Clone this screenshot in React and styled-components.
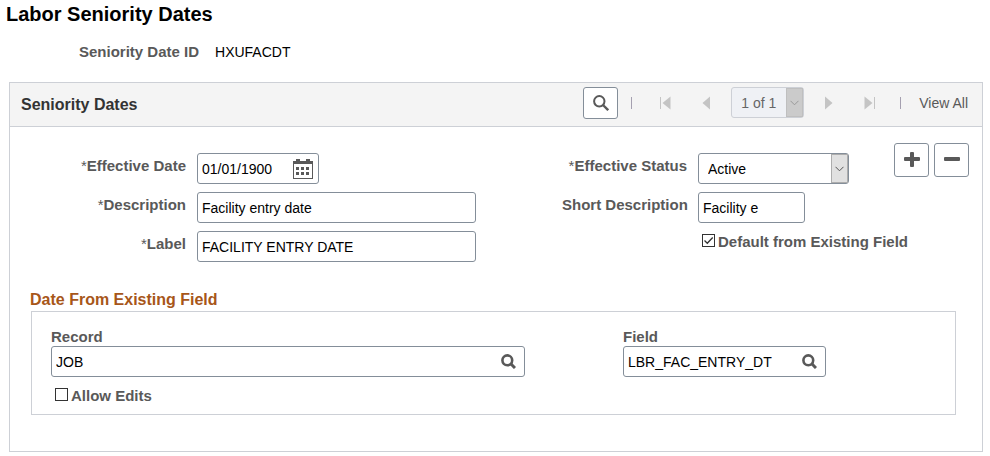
import React, { useState } from 'react';
import styled, { createGlobalStyle } from 'styled-components';

const GlobalStyle = createGlobalStyle`
  * {
    box-sizing: border-box;
  }

  body {
    margin: 0;
    background: #fff;
    color: #000;
    font-family: "Liberation Sans", Arial, sans-serif;
    font-size: 14px;
  }

  input, select, button {
    font-family: inherit;
    font-size: 14px;
  }
`;

const Page = styled.main`
  padding: 2px 7px 4px 9px;
`;

const PageTitle = styled.h1`
  margin: 0 0 0 -3px;
  font-size: 20px;
  line-height: 24px;
`;

const KeyRow = styled.div`
  display: flex;
  align-items: center;
  gap: 16px;
  padding: 16px 0 20px 70px;
  line-height: 20px;
`;

const KeyLabel = styled.span`
  color: #595959;
  font-size: 15px;
  font-weight: bold;
`;

const Panel = styled.section`
  border: 1px solid #cdd0d6;
`;

const PanelHeader = styled.header`
  display: flex;
  align-items: center;
  justify-content: space-between;
  height: 44px;
  padding: 0 14px 0 11px;
  background: #f4f4f4;
  border-bottom: 1px solid #cdd0d6;
`;

const PanelTitle = styled.h2`
  margin: 0;
  color: #333;
  font-size: 16px;
`;

const Toolbar = styled.div`
  display: flex;
  align-items: center;
  margin-bottom: 4px;
`;

const BoxButton = styled.button`
  display: flex;
  align-items: center;
  justify-content: center;
  width: 35px;
  height: ${(props) => props.$height || 34}px;
  padding: 0;
  color: #595959;
  background: #fff;
  border: 1px solid #848e99;
  border-radius: 3px;
  cursor: pointer;
`;

const NavButton = styled.button`
  display: flex;
  align-items: center;
  justify-content: center;
  width: 42px;
  height: 32px;
  padding: 0;
  color: #c4c4c4;
  background: none;
  border: none;
`;

const Separator = styled.span`
  width: 1px;
  height: 12px;
  margin: 0 ${(props) => props.$after}px 0 ${(props) => props.$before}px;
  background: #a5a0b0;
`;

const ViewAll = styled.a`
  color: #595959;
  text-decoration: none;
`;

const SelectBox = styled.div`
  position: relative;
  width: ${(props) => props.$width}px;
  margin: 0 ${(props) => (props.$muted ? 3 : 0)}px;
`;

const Select = styled.select`
  appearance: none;
  display: block;
  width: 100%;
  height: 31px;
  padding: 0 20px 0 9px;
  color: ${(props) => (props.disabled ? '#666' : '#000')};
  background: ${(props) => (props.disabled ? '#eff1f5' : '#fff')};
  border: 1px solid ${(props) => (props.disabled ? '#cdd0d6' : '#848e99')};
  border-radius: 3px;
  opacity: 1;
`;

const SelectArrow = styled.span`
  position: absolute;
  top: 1px;
  right: 1px;
  bottom: 1px;
  display: flex;
  align-items: center;
  justify-content: center;
  width: 17px;
  color: ${(props) => (props.$muted ? '#999' : '#555')};
  background: ${(props) => (props.$muted ? '#cbcbcb' : '#e1e1e1')};
  border: 1px solid ${(props) => (props.$muted ? '#bfbfbf' : '#adadad')};
  pointer-events: none;
`;

const FormArea = styled.div`
  display: flex;
  align-items: flex-start;
  padding: 16px 13px 27px 0;
`;

const FieldColumn = styled.div`
  display: grid;
  grid-template-columns: ${(props) => props.$columns};
  grid-auto-rows: 31px;
  gap: 8px 11px;
  flex: ${(props) => (props.$grow ? '1' : 'none')};
  padding-top: 10px;
`;

const Label = styled.label`
  color: #595959;
  font-size: 15px;
  font-weight: bold;
  line-height: 25px;
  text-align: right;
  white-space: nowrap;
`;

const Required = styled.span`
  font-weight: normal;
`;

const InputBox = styled.div`
  display: flex;
  align-items: center;
  width: ${(props) => props.$width}px;
  height: 31px;
  padding: 0 ${(props) => props.$end || 4}px 0 4px;
  border: 1px solid #848e99;
  border-radius: 3px;
`;

const Input = styled.input`
  flex: 1;
  min-width: 0;
  height: 100%;
  padding: 0;
  background: none;
  border: none;
  outline: none;
`;

const IconButton = styled.button`
  display: flex;
  padding: 0;
  color: #595959;
  background: none;
  border: none;
  cursor: pointer;
`;

const Actions = styled.div`
  display: flex;
  gap: 5px;
  margin-left: 45px;
`;

const CheckLabel = styled.label`
  display: flex;
  align-items: center;
  gap: 3px;
  height: 20px;
  padding-left: 4px;
  color: #595959;
  font-size: 15px;
  font-weight: bold;
  white-space: nowrap;
`;

const CheckSlot = styled.div`
  grid-column: 2;
`;

const CheckBox = styled.span`
  position: relative;
  display: flex;
  margin-bottom: 2px;

  svg {
    position: absolute;
    inset: 0;
    pointer-events: none;
  }
`;

const CheckInput = styled.input`
  appearance: none;
  width: 13px;
  height: 13px;
  margin: 0;
  background: #fff;
  border: 1px solid #333;
`;

const GroupTitle = styled.h3`
  margin: 0 0 0 20px;
  color: #a75619;
  font-size: 16px;
  line-height: 22px;
`;

const Group = styled.div`
  margin: 0 26px 36px 21px;
  padding: 15px 19px 9px;
  border: 1px solid #cdd0d6;
`;

const LookupRow = styled.div`
  display: flex;
  gap: 98px;
  margin-bottom: 8px;
`;

const Lookup = styled.div`
  display: flex;
  flex-direction: column;
`;

const LookupLabel = styled.label`
  color: #595959;
  font-size: 15px;
  font-weight: bold;
  line-height: 19px;
`;

const SearchIcon = () => (
  <svg width="16" height="16" viewBox="0 0 16 16" fill="none" stroke="currentColor" strokeWidth="2">
    <circle cx="6.3" cy="6.3" r="5.2" />
    <path d="M10 10l5.2 5.2" strokeWidth="2.4" />
  </svg>
);

const LookupIcon = () => (
  <svg width="15" height="15" viewBox="0 0 15 15" fill="none" stroke="currentColor">
    <circle cx="6.3" cy="6.3" r="4.9" strokeWidth="2.6" />
    <path d="M9.8 9.8l4.2 4.2" strokeWidth="3" />
  </svg>
);

const CalendarIcon = () => (
  <svg width="20" height="20" viewBox="0 0 20 20" fill="currentColor" shapeRendering="crispEdges">
    <path d="M0 2h3V0h4v2h6V0h4v2h3v18H0zM1 5v14h18V5z" fillRule="evenodd" />
    <path d="M3 8h3v3H3zM8 8h3v3H8zM13 8h3v3h-3zM3 13h3v3H3zM8 13h3v3H8zM13 13h3v3h-3z" />
  </svg>
);

const ChevronIcon = () => (
  <svg width="9" height="6" viewBox="0 0 9 6" fill="none" stroke="currentColor">
    <path d="M0.5 0.8l4 4 4-4" />
  </svg>
);

const ArrowIcon = ({ back, end }) => (
  <svg width="12" height="14" viewBox="0 0 12 14" fill="currentColor">
    <g transform={back ? 'matrix(-1 0 0 1 12 0)' : undefined}>
      <path d={end ? 'M0.5 0.5l8 6.5-8 6.5z' : 'M3 0.5l7.5 6.5-7.5 6.5z'} />
      {end && <path d="M10 1h1v12h-1z" />}
    </g>
  </svg>
);

const PlusIcon = ({ minus }) => (
  <svg width="16" height="16" viewBox="0 0 16 16" fill="currentColor">
    <rect x="0" y="5" width="16" height="4" rx="1" />
    {!minus && <rect x="6" y="0" width="4" height="15" rx="1" />}
  </svg>
);

const Check = ({ text, initial }) => {
  const [checked, setChecked] = useState(initial);

  return (
    <CheckLabel>
      <CheckBox>
        <CheckInput type="checkbox" checked={checked} onChange={(e) => setChecked(e.target.checked)} />
        {checked && (
          <svg width="13" height="13" viewBox="0 0 13 13" fill="none" stroke="#333" strokeWidth="1.3">
            <path d="M2.5 6.5l2.8 2.8 5.4-5.8" />
          </svg>
        )}
      </CheckBox>
      {text}
    </CheckLabel>
  );
};

const TextField = ({ id, width, value, end, children }) => (
  <InputBox $width={width} $end={end}>
    <Input id={id} type="text" defaultValue={value} />
    {children}
  </InputBox>
);

const App = () => {
  return (
    <Page>
      <GlobalStyle />
      <PageTitle>Labor Seniority Dates</PageTitle>
      <KeyRow>
        <KeyLabel>Seniority Date ID</KeyLabel>
        <span>HXUFACDT</span>
      </KeyRow>

      <Panel>
        <PanelHeader>
          <PanelTitle>Seniority Dates</PanelTitle>
          <Toolbar>
            <BoxButton $height={32} aria-label="Find"><SearchIcon /></BoxButton>
            <Separator $before={13} $after={12} />
            <NavButton disabled aria-label="First"><ArrowIcon back end /></NavButton>
            <NavButton disabled aria-label="Previous"><ArrowIcon back /></NavButton>
            <SelectBox $width={73} $muted>
              <Select disabled aria-label="Row">
                <option>1 of 1</option>
              </Select>
              <SelectArrow $muted><ChevronIcon /></SelectArrow>
            </SelectBox>
            <NavButton disabled aria-label="Next"><ArrowIcon /></NavButton>
            <NavButton disabled aria-label="Last"><ArrowIcon end /></NavButton>
            <Separator $before={9} $after={18} />
            <ViewAll href="#all">View All</ViewAll>
          </Toolbar>
        </PanelHeader>

        <FormArea>
          <FieldColumn $columns="176px auto" $grow>
            <Label htmlFor="effdt"><Required>*</Required>Effective Date</Label>
            <TextField id="effdt" width={122} value="01/01/1900" end={5}>
              <IconButton aria-label="Choose a date"><CalendarIcon /></IconButton>
            </TextField>
            <Label htmlFor="descr"><Required>*</Required>Description</Label>
            <TextField id="descr" width={279} value="Facility entry date" />
            <Label htmlFor="label"><Required>*</Required>Label</Label>
            <TextField id="label" width={279} value="FACILITY ENTRY DATE" />
          </FieldColumn>

          <FieldColumn $columns="125px 151px">
            <Label htmlFor="status"><Required>*</Required>Effective Status</Label>
            <SelectBox $width={151}>
              <Select id="status" defaultValue="Active">
                <option>Active</option>
                <option>Inactive</option>
              </Select>
              <SelectArrow><ChevronIcon /></SelectArrow>
            </SelectBox>
            <Label htmlFor="short">Short Description</Label>
            <TextField id="short" width={107} value="Facility e" />
            <CheckSlot>
              <Check text="Default from Existing Field" initial={true} />
            </CheckSlot>
          </FieldColumn>

          <Actions>
            <BoxButton aria-label="Add row"><PlusIcon /></BoxButton>
            <BoxButton aria-label="Delete row"><PlusIcon minus /></BoxButton>
          </Actions>
        </FormArea>

        <GroupTitle>Date From Existing Field</GroupTitle>
        <Group>
          <LookupRow>
            <Lookup>
              <LookupLabel htmlFor="record">Record</LookupLabel>
              <TextField id="record" width={474} value="JOB" end={8}>
                <IconButton aria-label="Look up record"><LookupIcon /></IconButton>
              </TextField>
            </Lookup>
            <Lookup>
              <LookupLabel htmlFor="field">Field</LookupLabel>
              <TextField id="field" width={203} value="LBR_FAC_ENTRY_DT" end={8}>
                <IconButton aria-label="Look up field"><LookupIcon /></IconButton>
              </TextField>
            </Lookup>
          </LookupRow>
          <Check text="Allow Edits" initial={false} />
        </Group>
      </Panel>
    </Page>
  );
};

export default App;
